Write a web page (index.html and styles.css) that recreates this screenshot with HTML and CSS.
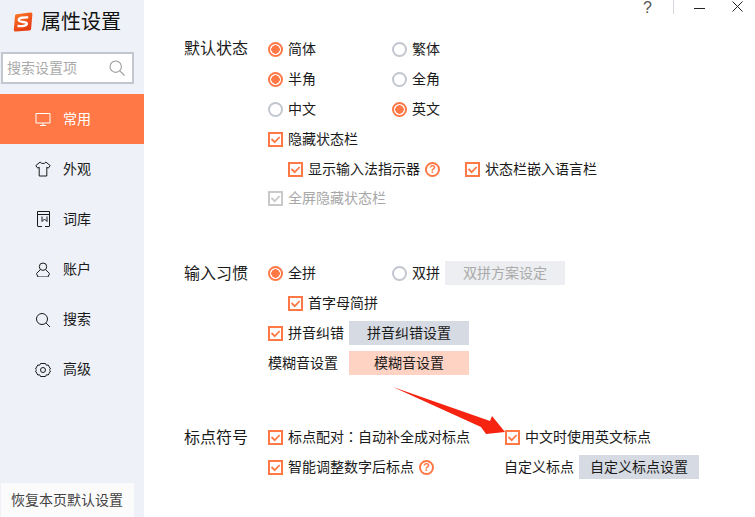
FILE: index.html
```html
<!DOCTYPE html>
<html lang="zh-CN">
<head>
<meta charset="utf-8">
<title>属性设置</title>
<link rel="stylesheet" href="styles.css">
</head>
<body>
<svg class="defs" width="0" height="0" aria-hidden="true">
  <symbol id="check" viewBox="0 0 15 15">
    <rect x="1" y="1" width="13" height="13" fill="none" stroke="currentColor" stroke-width="2"/>
    <path d="M3.500 7 6.700 10.200l5-5.200" fill="none" stroke="currentColor" stroke-width="1.800"/>
  </symbol>
</svg>
<div class="app">
  <aside class="side">
    <div class="brand">
      <svg class="logo" viewBox="0 0 20 20" width="20" height="20">
        <defs><linearGradient id="lg" x1="0" y1="0" x2="0.6" y2="1"><stop offset="0" stop-color="#ff7a28"/><stop offset="1" stop-color="#e63a10"/></linearGradient></defs>
        <path d="M3.600 2.200 17.400.6c1.200-.1 2 .6 2 1.700l-1.300 14.400c-.1 1-.8 1.700-1.800 1.800l-13.600 1c-1.200.1-2-.7-1.900-1.800L2 3.900c.1-1 .7-1.600 1.600-1.700Z" fill="url(#lg)"/>
        <path d="M15.200 5.400C10.500 5.200 5.800 5.600 5.700 8.100c-.1 2.500 8.300 1.200 8.200 3.500-.1 2.300-4.800 2.800-9.400 2.400" fill="none" stroke="#fff" stroke-width="2.400"/>
      </svg>
      <span class="brand-name">属性设置</span>
    </div>
    <div class="search">
      <span class="search-text">搜索设置项</span>
      <svg viewBox="0 0 16 16" width="16" height="16" class="search-icon"><circle cx="6.700" cy="6.700" r="5.700" fill="none" stroke="currentColor" stroke-width="1.100"/><path d="m10.800 10.800 4.700 4.700" stroke="currentColor" stroke-width="1.100"/></svg>
    </div>
    <nav class="nav">
      <a class="nav-item is-active">
        <svg viewBox="0 0 16 16" width="16" height="16"><path d="M1 2.500h14v9.500H1zM8 12v2.500M5 14.500h6" fill="none" stroke="currentColor"/></svg>
        <span>常用</span>
      </a>
      <a class="nav-item">
        <svg viewBox="0 0 16 16" width="16" height="16"><path d="M5.200 1 .8 4.600l2 2.600 1.400-1V15h7.600V6.200l1.400 1 2-2.600L10.800 1C10.200 3 5.800 3 5.200 1Z" fill="none" stroke="currentColor"/></svg>
        <span>外观</span>
      </a>
      <a class="nav-item">
        <svg viewBox="0 1 16 16" width="16" height="16"><path d="M2.500 16V1.500h12.000V16M2.500 4.500h12M2.500 16.500H7M14.500 16.500H10M7 6.500v5l2.500-2.500 2.500 2.500v-5" fill="none" stroke="currentColor"/></svg>
        <span>词库</span>
      </a>
      <a class="nav-item">
        <svg viewBox="0 -1 16 16" width="16" height="16"><circle cx="8" cy="4.700" r="3.700" fill="none" stroke="currentColor"/><path d="M5.500 7.500 1.500 11.500l1.500 3.500h10l1.500-3.500-4-4" fill="none" stroke="currentColor"/></svg>
        <span>账户</span>
      </a>
      <a class="nav-item">
        <svg viewBox="0 -1 16 16" width="16" height="16"><circle cx="7" cy="7" r="5.500" fill="none" stroke="currentColor"/><path d="m11 11 4.300 4.300" stroke="currentColor"/></svg>
        <span>搜索</span>
      </a>
      <a class="nav-item">
        <svg viewBox="0 -1 16 16" width="16" height="16"><path d="M5.500 1.500h5l.8 1.700 1.900-.2 2.300 4-1.100 1 1.100 1-2.300 4-1.900-.2-.8 1.700h-5l-.8-1.700-1.900.2-2.300-4 1.100-1-1.100-1 2.300-4 1.900.2Z" fill="none" stroke="currentColor"/><circle cx="8" cy="8" r="2.500" fill="none" stroke="currentColor"/></svg>
        <span>高级</span>
      </a>
    </nav>
    <button class="reset">恢复本页默认设置</button>
  </aside>

  <main class="main">
    <div class="winbar">
      <span class="win-help">?</span>
      <span class="win-sep"></span>
      <svg class="win-min" viewBox="0 0 11 11" width="11" height="11"><path d="M0 7.500h11" stroke="#222"/></svg>
      <svg class="win-close" viewBox="0 0 11 11" width="11" height="11"><path d="m.5.500 10 10M10.500.500l-10 10" stroke="#222"/></svg>
    </div>

    <section class="group g1">
      <h2 class="group-title">默认状态</h2>
      <div class="rows">
        <div class="row">
          <label class="opt col-a"><i class="radio on"></i>简体</label>
          <label class="opt"><i class="radio"></i>繁体</label>
        </div>
        <div class="row">
          <label class="opt col-a"><i class="radio on"></i>半角</label>
          <label class="opt"><i class="radio"></i>全角</label>
        </div>
        <div class="row">
          <label class="opt col-a"><i class="radio"></i>中文</label>
          <label class="opt"><i class="radio on"></i>英文</label>
        </div>
        <div class="row">
          <label class="opt"><svg class="box"><use href="#check"/></svg>隐藏状态栏</label>
        </div>
        <div class="row indent">
          <label class="opt"><svg class="box"><use href="#check"/></svg>显示输入法指示器<b class="help">?</b></label>
          <label class="opt next"><svg class="box"><use href="#check"/></svg>状态栏嵌入语言栏</label>
        </div>
        <div class="row row-tight">
          <label class="opt muted"><svg class="box"><use href="#check"/></svg>全屏隐藏状态栏</label>
        </div>
      </div>
    </section>

    <section class="group g2">
      <h2 class="group-title">输入习惯</h2>
      <div class="rows">
        <div class="row">
          <label class="opt col-a"><i class="radio on"></i>全拼</label>
          <label class="opt"><i class="radio"></i>双拼</label>
          <button class="btn btn-off">双拼方案设定</button>
        </div>
        <div class="row indent">
          <label class="opt"><svg class="box"><use href="#check"/></svg>首字母简拼</label>
        </div>
        <div class="row">
          <label class="opt"><svg class="box"><use href="#check"/></svg>拼音纠错</label>
          <button class="btn">拼音纠错设置</button>
        </div>
        <div class="row">
          <span class="opt plain">模糊音设置</span>
          <button class="btn btn-hot">模糊音设置</button>
        </div>
      </div>
    </section>

    <section class="group g3">
      <h2 class="group-title">标点符号</h2>
      <div class="rows">
        <div class="row">
          <label class="opt col-b"><svg class="box"><use href="#check"/></svg><span>标点配对<span class="colon" lang="zh-TW">：</span>自动补全成对标点</span></label>
          <label class="opt"><svg class="box"><use href="#check"/></svg>中文时使用英文标点</label>
        </div>
        <div class="row">
          <label class="opt col-c"><svg class="box"><use href="#check"/></svg>智能调整数字后标点<b class="help">?</b></label>
          <span class="opt">自定义标点</span>
          <button class="btn">自定义标点设置</button>
        </div>
      </div>
    </section>

    <svg class="arrow" viewBox="0 0 130 60" width="130" height="60">
      <path d="M1 0 98 34 100 29 113 45 94 47 89 40Z" fill="#f5230f"/>
    </svg>
  </main>
</div>
</body>
</html>
```

FILE: styles.css
```css
* { box-sizing: border-box; }
html, body { margin: 0; height: 100%; }
body {
  width: 755px;
  height: 517px;
  overflow: hidden;
  background: #fff;
  color: #1a1a1a;
  font: 14px/20px "Noto Sans CJK SC", "Liberation Sans", sans-serif;
}
.defs { position: absolute; }
.app { display: flex; height: 517px; }

.side {
  width: 144px;
  flex: none;
  display: flex;
  flex-direction: column;
  background: #eef1f7;
}
.brand {
  height: 52px;
  padding: 10px 0 0 13px;
  display: flex;
  align-items: flex-start;
  gap: 8px;
}
.logo { margin-top: 2px; }
.brand-name { font-size: 20px; line-height: 22px; color: #111; }
.search {
  margin-left: 1px;
  width: 133px;
  height: 32px;
  border: 2px solid #c2c6cf;
  background: #fff;
  display: flex;
  align-items: center;
  justify-content: space-between;
  padding: 0 7px 2px 4px;
  color: #aaa;
}
.search-icon { color: #9b9b9b; margin-top: 2px; }
.nav { margin-top: 10px; }
.nav-item {
  height: 50px;
  display: flex;
  align-items: center;
  gap: 12px;
  padding: 0 0 2px 35px;
  color: #1a1a1a;
}
.nav-item svg { margin-top: 2px; }
.nav-item.is-active { background: #ff7846; color: #fff; }
.reset {
  margin: auto 0 0 1px;
  width: 133px;
  height: 34px;
  border: 0;
  padding: 0 1px 2px 0;
  background: #fbfbfc;
  color: #444;
  font: inherit;
}

.main { position: relative; flex: 1; min-width: 0; padding: 33px 0 0 40px; }
.winbar { position: absolute; inset: 0 0 auto 0; height: 15px; }
.win-help {
  position: absolute;
  left: 499px;
  top: 0;
  font: 16px/15px "Liberation Sans", sans-serif;
  color: #555;
}
.win-sep { position: absolute; left: 529px; top: 0; width: 1px; height: 14px; background: #d5d8df; }
.win-min { position: absolute; left: 550px; top: 1px; }
.win-close { position: absolute; left: 588px; top: 1px; }

.group { display: flex; }
.g1 .rows { padding-top: 1px; }
.g2 { margin-top: 45px; }
.g3 { margin-top: 44px; }
.group-title {
  width: 84px;
  flex: none;
  margin: 0;
  height: 30px;
  font-size: 16px;
  font-weight: 400;
  line-height: 28px;
}
.rows { flex: 1; }
.row { height: 30px; display: flex; align-items: center; gap: 5px; padding-bottom: 2px; }
.row-tight { margin-top: -1px; }
.indent { padding-left: 20px; }
.opt { display: flex; align-items: center; gap: 5px; white-space: nowrap; }
.plain { margin-right: 6px; }
.col-a { width: 119px; }
.col-b { width: 232px; }
.col-c { width: 231px; }
.next { margin-left: 20px; }
.muted { color: #a8a8a8; }
.muted .box { color: #c9c9c9; }
.colon { font-family: "Noto Sans CJK TC", sans-serif; font-feature-settings: "locl" 1; }
.box { width: 15px; height: 15px; flex: none; margin-top: 2px; color: #ff7846; }
.radio {
  width: 15px;
  height: 15px;
  flex: none;
  margin-top: 2px;
  border: 2px solid #c2c6cf;
  border-radius: 50%;
  background: #fff;
}
.radio.on { border-color: #ff7846; background: radial-gradient(circle, #ff7846 0 4px, #fff 4.500px); }
.help {
  width: 15px;
  height: 15px;
  margin-top: 2px;
  border: 2px solid #ff7846;
  border-radius: 50%;
  color: #ff7846;
  font: 700 11px/11px "Liberation Sans", sans-serif;
  text-align: center;
}
.btn {
  width: 120px;
  height: 24px;
  margin-top: 2px;
  border: 0;
  padding: 0 0 2px;
  background: #d6dae2;
  color: #1a1a1a;
  font: inherit;
}
.btn-off { background: #eceef1; color: #aaa; }
.btn-hot { background: #ffd3c4; }

.arrow { position: absolute; left: 248px; top: 387px; }
```
